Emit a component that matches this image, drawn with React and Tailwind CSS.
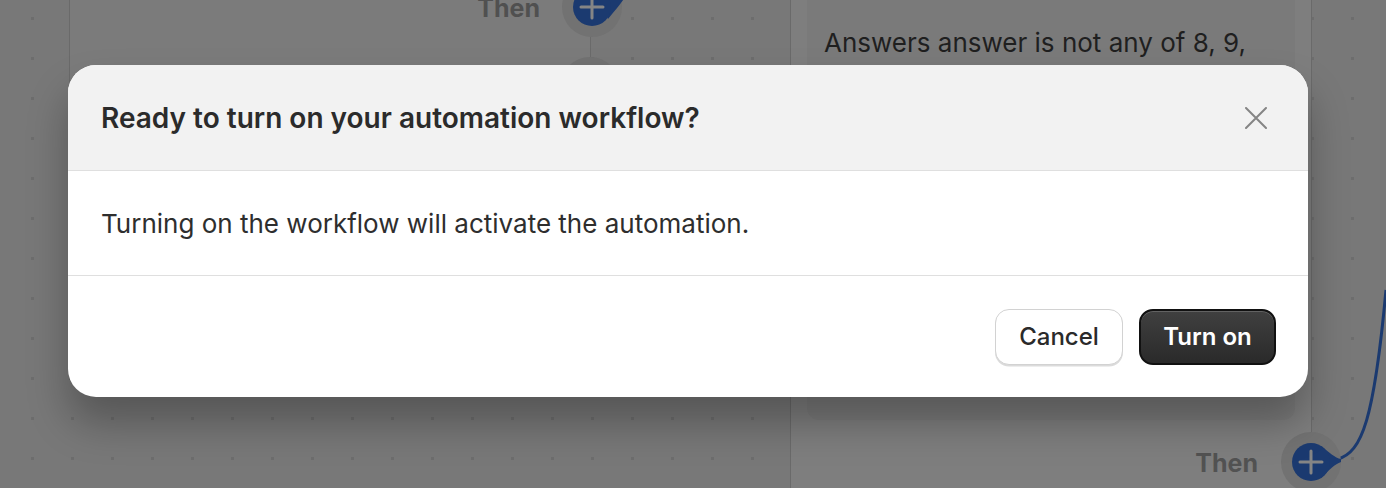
import React from "react";

function DotGrid() {
  return (
    <svg className="absolute inset-0" width="1386" height="488" aria-hidden="true">
      <defs>
        <pattern id="canvas-dots" width="40" height="40" patternUnits="userSpaceOnUse">
          <rect x="31" y="17" width="3" height="3" fill="#6d6d6d" />
        </pattern>
      </defs>
      <rect width="1386" height="488" fill="url(#canvas-dots)" />
    </svg>
  );
}

function AddHandle({ className, tail }) {
  return (
    <div className={`absolute ${className}`}>
      <div className="absolute left-[-30px] top-[-30px] w-[60px] h-[60px] rounded-full bg-[#727272]" />
      <svg className="absolute left-[-20px] top-[-20px] overflow-visible" width="40" height="40" viewBox="-20 -20 40 40">
        {tail}
        <circle cx="0" cy="0" r="19" fill="#1b3a70" />
        <path d="M0 -11 V11 M-11 0 H11" stroke="#858585" strokeWidth="3" strokeLinecap="round" />
      </svg>
    </div>
  );
}

export default function App() {
  return (
    <div className="relative w-[1386px] h-[488px] overflow-hidden bg-[#787878] font-['Inter',sans-serif]">
      <DotGrid />

      {/* left workflow node */}
      <div className="absolute left-[69px] top-0 w-[522px] h-[380px] bg-[#7b7b7b] border-x border-[#6a6a6a]">
        <span className="absolute right-[50px] top-[-10px] text-[25px] font-bold text-[#505050]">Then</span>
      </div>
      <div className="absolute left-[560px] top-[57px] w-[60px] h-[60px] rounded-full bg-[#727272]" />

      {/* right workflow node */}
      <div className="absolute left-[790px] top-0 w-[522px] h-[488px] bg-[#7e7e7e] border-x border-[#6a6a6a] px-[16px]">
        <div className="mt-[-20px] h-[440px] rounded-[12px] bg-[#7a7a7a] px-[17px] pt-[47px]">
          <p className="text-[26px] leading-[32px] text-[#1f1f1f]">Answers answer is not any of 8, 9,</p>
        </div>
        <span className="absolute right-[53px] top-[445px] text-[25px] font-bold text-[#525252]">Then</span>
      </div>

      {/* connectors */}
      <svg className="absolute inset-0 pointer-events-none" width="1386" height="488">
        <path d="M1338 459 C1362 452, 1374 420, 1386 290" fill="none" stroke="#1b3a70" strokeWidth="3" />
        <path d="M605 0 C620 -2, 630 -4, 640 -8" fill="none" stroke="#1b3a70" strokeWidth="3" />
      </svg>

      <AddHandle
        className="left-[592px] top-[7px]"
        tail={<path d="M6 -18 C14 -20, 22 -14, 34 -12 C30 -4, 24 2, 16 12 Z" fill="#1b3a70" />}
      />
      <AddHandle
        className="left-[1311px] top-[462px]"
        tail={<path d="M10 -16 C18 -10, 24 -4, 30 -3 L30 0 C24 2, 18 8, 10 16 Z" fill="#1b3a70" />}
      />

      {/* confirmation dialog */}
      <div className="absolute left-[68px] top-[65px] w-[1240px] h-[332px] rounded-[28px] bg-white overflow-hidden flex flex-col shadow-[0_26px_40px_rgba(0,0,0,0.28)]">
        <div className="h-[106px] shrink-0 flex items-center justify-between bg-[#f2f2f2] border-b border-[#dfdfdf] pl-[33px] pr-[41px]">
          <h2 className="text-[28px] font-semibold text-[#2b2b2b]">
            Ready to turn on your automation workflow?
          </h2>
          <svg width="22" height="22" viewBox="0 0 22 22" aria-label="Close">
            <path d="M1 1 L21 21 M21 1 L1 21" stroke="#858585" strokeWidth="2" strokeLinecap="round" />
          </svg>
        </div>
        <div className="h-[105px] shrink-0 flex items-center border-b border-[#dfdfdf] px-[33px]">
          <p className="text-[26px] text-[#2e2e2e]">Turning on the workflow will activate the automation.</p>
        </div>
        <div className="flex-1 flex items-center justify-end gap-[16px] px-[32px]">
          <button className="w-[128px] h-[56px] rounded-[14px] bg-white border-[1.5px] border-[#d2d2d2] shadow-[0_1.5px_0_rgba(0,0,0,0.14)] text-[24px] font-medium text-[#2a2a2a]">
            Cancel
          </button>
          <button className="w-[137px] h-[56px] rounded-[14px] bg-gradient-to-b from-[#404040] to-[#2a2a2a] border-2 border-[#111111] shadow-[inset_0_1px_0_rgba(255,255,255,0.18)] text-[24px] font-semibold text-white">
            Turn on
          </button>
        </div>
      </div>
    </div>
  );
}
